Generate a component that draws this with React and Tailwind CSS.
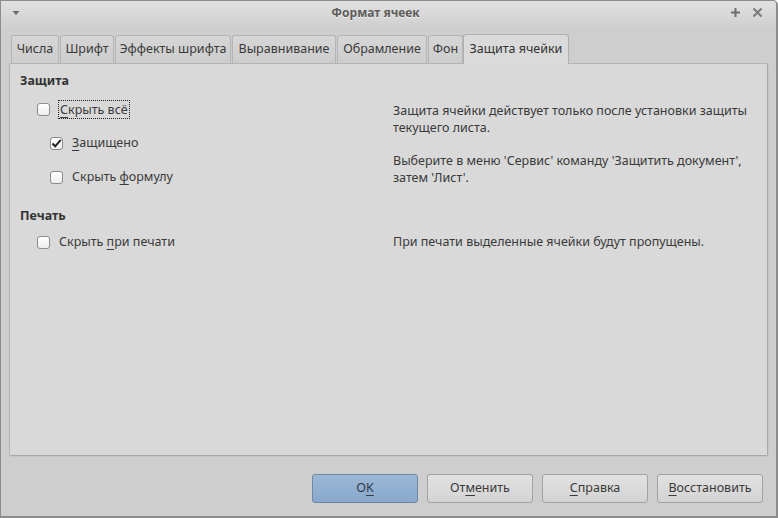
import React from 'react';

const tabs = [
    { label: 'Числа', w: 'w-[48px]' },
    { label: 'Шрифт', w: 'w-[54px]' },
    { label: 'Эффекты шрифта', w: 'w-[116px]' },
    { label: 'Выравнивание', w: 'w-[104px]' },
    { label: 'Обрамление', w: 'w-[90px]' },
    { label: 'Фон', w: 'w-[35px]' },
];

function CheckBox({ checked }) {
    return (
        <span className="w-[13px] h-[13px] shrink-0 rounded-[3px] border border-[#8c8c8c] bg-gradient-to-b from-[#ffffff] to-[#eeeeee] flex items-center justify-center">
            {checked && (
                <svg width="11" height="11" viewBox="0 0 11 11">
                    <path d="M1.5 5.5 L4.2 8.3 L9.8 1.8" fill="none" stroke="#222" strokeWidth="2" />
                </svg>
            )}
        </span>
    );
}

function Button({ children, primary }) {
    return (
        <button
            className={
                primary
                    ? 'w-[106px] h-[29px] rounded-[3px] border border-[#6e87a3] bg-gradient-to-b from-[#9bb7d6] to-[#89a8cb] text-[#2f3a46]'
                    : 'w-[106px] h-[29px] rounded-[3px] border border-[#a2a2a2] bg-gradient-to-b from-[#e2e2e2] to-[#d3d3d3] text-[#3a3a3a]'
            }
        >
            {children}
        </button>
    );
}

export default function App() {
    return (
        <div className="w-[778px] h-[518px] bg-[#cecece] border border-[#8c8c8c] border-r-2 border-b-2 rounded-tr-[5px] flex flex-col text-[#3a3a3a] font-['Noto_Sans',sans-serif] text-[12.5px] overflow-hidden">
            {/* title bar */}
            <div className="h-[27px] shrink-0 bg-gradient-to-b from-[#e1e1e1] to-[#cfcfcf] flex items-center px-[9px]">
                <svg width="10" height="10" viewBox="0 0 10 10" className="ml-[1px] mt-[-4px]">
                    <path d="M1.5 3 L8.5 3 L5 7 Z" fill="#6a6a6a" />
                </svg>
                <div className="flex-1 text-center font-bold text-[12px] text-[#5c5c5c] mt-[-3px] [text-shadow:0_1px_0_#eeeeee]">Формат ячеек</div>
                <div className="flex items-center gap-[11px] mt-[-4px] mr-[4px]">
                    <svg width="11" height="11" viewBox="0 0 11 11">
                        <path d="M5.5 1 V10 M1 5.5 H10" stroke="#6e6e6e" strokeWidth="2" />
                    </svg>
                    <svg width="11" height="11" viewBox="0 0 11 11">
                        <path d="M1.5 1.5 L9.5 9.5 M9.5 1.5 L1.5 9.5" stroke="#7a7a7a" strokeWidth="2" />
                    </svg>
                </div>
            </div>

            {/* tabs */}
            <div className="h-[35px] shrink-0 flex items-end pl-[10px] gap-[1px]">
                {tabs.map(t => (
                    <div
                        key={t.label}
                        className={`${t.w} h-[28px] shrink-0 rounded-t-[3px] border border-b-0 border-[#b4b4b4] bg-gradient-to-b from-[#d6d6d6] to-[#cdcdcd] flex items-center justify-center text-[#3a3a3a] whitespace-nowrap`}
                    >
                        {t.label}
                    </div>
                ))}
                <div className="w-[106px] h-[30px] shrink-0 ml-[-1px] mb-[-1px] rounded-t-[3px] border border-b-0 border-[#b0b0b0] bg-[#dadada] flex items-center justify-center text-[#333] relative z-10 whitespace-nowrap">
                    Защита ячейки
                </div>
            </div>

            {/* panel */}
            <div className="mx-[8px] h-[393px] shrink-0 border border-[#b4b4b4] border-r-[#a8a8a8] border-b-[#a8a8a8] rounded-[2px] bg-[#d9d9d9] px-[10px] pt-[8px] shadow-[1px_1px_0_#c4c4c4]">
                <div className="h-[18px] leading-[18px] font-bold text-[#333]">Защита</div>
                <div className="flex mt-[2px]">
                    <div className="w-[373px] shrink-0">
                        <div className="h-[34px] flex items-center pl-[17px]">
                            <CheckBox />
                            <span className="ml-[8px] px-[1px] h-[19px] leading-[17px] border border-dotted border-[#222]">
                                <u className="underline-offset-[3px]">С</u>крыть всё
                            </span>
                        </div>
                        <div className="h-[34px] flex items-center pl-[30px]">
                            <CheckBox checked />
                            <span className="ml-[9px]">
                                <u className="underline-offset-[3px]">З</u>ащищено
                            </span>
                        </div>
                        <div className="h-[34px] flex items-center pl-[30px]">
                            <CheckBox />
                            <span className="ml-[9px]">
                                Скрыть <u className="underline-offset-[3px]">ф</u>ормулу
                            </span>
                        </div>
                    </div>
                    <div className="pt-[10px] leading-[17px] whitespace-nowrap">
                        <div>Защита ячейки действует только после установки защиты<br />текущего листа.</div>
                        <div className="mt-[16px]">Выберите в меню 'Сервис' команду 'Защитить документ',<br />затем 'Лист'.</div>
                    </div>
                </div>
                <div className="h-[18px] leading-[18px] font-bold text-[#333] mt-[13px]">Печать</div>
                <div className="flex h-[34px] items-center">
                    <div className="w-[373px] shrink-0 flex items-center pl-[17px]">
                        <CheckBox />
                        <span className="ml-[9px]">
                            Скрыть <u className="underline-offset-[3px]">п</u>ри печати
                        </span>
                    </div>
                    <div className="whitespace-nowrap">При печати выделенные ячейки будут пропущены.</div>
                </div>
            </div>

            {/* buttons */}
            <div className="flex justify-end gap-[9px] pr-[13px] mt-[18px]">
                <Button primary>O<u className="underline-offset-[3px]">K</u></Button>
                <Button>От<u className="underline-offset-[3px]">м</u>енить</Button>
                <Button><u className="underline-offset-[3px]">С</u>правка</Button>
                <Button><u className="underline-offset-[3px]">В</u>осстановить</Button>
            </div>
        </div>
    );
}
